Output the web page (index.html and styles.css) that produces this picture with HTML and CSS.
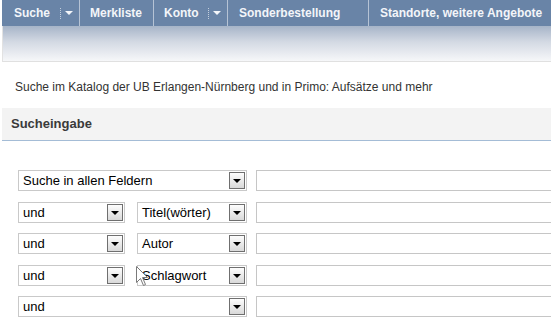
FILE: index.html
```html
<!DOCTYPE html>
<html lang="de">
<head>
<meta charset="utf-8">
<title>Suche</title>
<link rel="stylesheet" href="styles.css">
</head>
<body>
<div class="header">
  <nav class="nav">
    <div class="nav-item w1"><span>Suche</span><span class="dd"><i class="dots"></i><i class="tri"></i></span></div>
    <div class="nav-item w2"><span>Merkliste</span></div>
    <div class="nav-item w3"><span>Konto</span><span class="dd"><i class="dots"></i><i class="tri"></i></span></div>
    <div class="nav-item w4"><span>Sonderbestellung</span></div>
    <div class="nav-item w5"><span>Standorte, weitere Angebote</span></div>
  </nav>
  <div class="band"></div>
</div>
<p class="intro">Suche im Katalog der UB Erlangen-Nürnberg und in Primo: Aufsätze und mehr</p>
<div class="section-title">Sucheingabe</div>
<div class="form">
  <div class="row">
    <div class="sel s-wide"><span>Suche in allen Feldern</span><b class="btn"></b></div>
    <div class="txt"></div>
  </div>
  <div class="row">
    <div class="sel s-op"><span>und</span><b class="btn"></b></div>
    <div class="sel s-field"><span>Titel(wörter)</span><b class="btn"></b></div>
    <div class="txt"></div>
  </div>
  <div class="row">
    <div class="sel s-op"><span>und</span><b class="btn"></b></div>
    <div class="sel s-field"><span>Autor</span><b class="btn"></b></div>
    <div class="txt"></div>
  </div>
  <div class="row cursor-row">
    <div class="sel s-op"><span>und</span><b class="btn"></b></div>
    <div class="sel s-field"><span>Schlagwort</span><b class="btn"></b></div>
    <div class="txt"></div>
    <svg class="cursor" width="13" height="21" viewBox="0 0 13 21"><path d="M0.5 0.5 L0.5 16.5 L4.5 12.5 L7.5 19.5 L9.5 18.5 L6.5 11.5 L11.5 11.5 Z" fill="#fff" stroke="#7a7a7a" stroke-width="1"/></svg>
  </div>
  <div class="row">
    <div class="sel s-wide"><span>und</span><b class="btn"></b></div>
    <div class="txt"></div>
  </div>
</div>
</body>
</html>
```
FILE: styles.css
```css
html, body {
  margin: 0;
  padding: 0;
  overflow: hidden;
  background: #fff;
  font-family: "Liberation Sans", Arial, sans-serif;
}
.header {
  margin-left: 2px;
  border-left: 1px solid #e2e2e2;
}
.nav {
  display: flex;
  height: 26px;
  background: #6984a7;
  margin-left: -1px;
}
.nav-item {
  display: flex;
  align-items: center;
  box-sizing: border-box;
  height: 26px;
  border-right: 1px solid #b6c3d5;
  color: #f3f5f9;
  font-size: 12px;
  font-weight: bold;
  white-space: nowrap;
}
.w1 { width: 78px; padding-left: 12px; }
.w2 { width: 74px; padding-left: 10px; }
.w3 { width: 74px; padding-left: 10px; }
.w4 { width: 141px; padding-left: 11px; }
.w5 { flex: 1; padding-left: 11px; border-right: 0; }
.dd {
  margin-left: auto;
  display: flex;
  align-items: center;
  padding-right: 6px;
}
.dots {
  display: block;
  width: 0;
  height: 11px;
  border-left: 1px dotted #c5d0de;
  margin-right: 4px;
}
.tri {
  display: block;
  width: 0;
  height: 0;
  border-left: 4px solid transparent;
  border-right: 4px solid transparent;
  border-top: 4px solid #f3f5f9;
}
.band {
  height: 35px;
  background: linear-gradient(#a6b4c8, #d3d9e3 45%, #f6f7f9);
  border-bottom: 1px solid #e0e0e0;
}
.intro {
  margin: 18px 0 0 15px;
  font-size: 12px;
  line-height: 14px;
  color: #333;
}
.section-title {
  margin: 14px 0 0 2px;
  height: 32px;
  padding-left: 9px;
  background: #f3f3f3;
  border-bottom: 1px solid #a4bcd6;
  font-size: 13px;
  font-weight: bold;
  color: #3a3a3a;
  line-height: 32px;
}
.form {
  padding: 29px 0 0 18px;
  display: flex;
  flex-direction: column;
  gap: 10.5px;
  width: 700px;
}
.row {
  position: relative;
  display: flex;
  align-items: stretch;
  height: 21px;
}
.sel {
  position: relative;
  box-sizing: border-box;
  height: 21px;
  border: 1px solid #c9c9c9;
  background: #fff;
  font-size: 13px;
  line-height: 19px;
  color: #000;
  padding-left: 4px;
}
.s-wide { width: 229px; margin-right: 9px; }
.s-op { width: 107px; margin-right: 12px; }
.s-field { width: 110px; margin-right: 9px; }
.btn {
  position: absolute;
  right: 1px;
  top: 1px;
  box-sizing: border-box;
  width: 16px;
  height: 17px;
  border: 1px solid #6f6f6f;
  background: linear-gradient(#fdfdfd, #d9d9d9);
}
.btn::after {
  content: "";
  position: absolute;
  left: 3px;
  top: 6px;
  border-left: 4px solid transparent;
  border-right: 4px solid transparent;
  border-top: 4px solid #000;
}
.txt {
  flex: 1;
  box-sizing: border-box;
  height: 21px;
  border: 1px solid #c6c6c6;
  background: #fff;
}
.cursor {
  position: absolute;
  left: 118px;
  top: 1px;
}
```
